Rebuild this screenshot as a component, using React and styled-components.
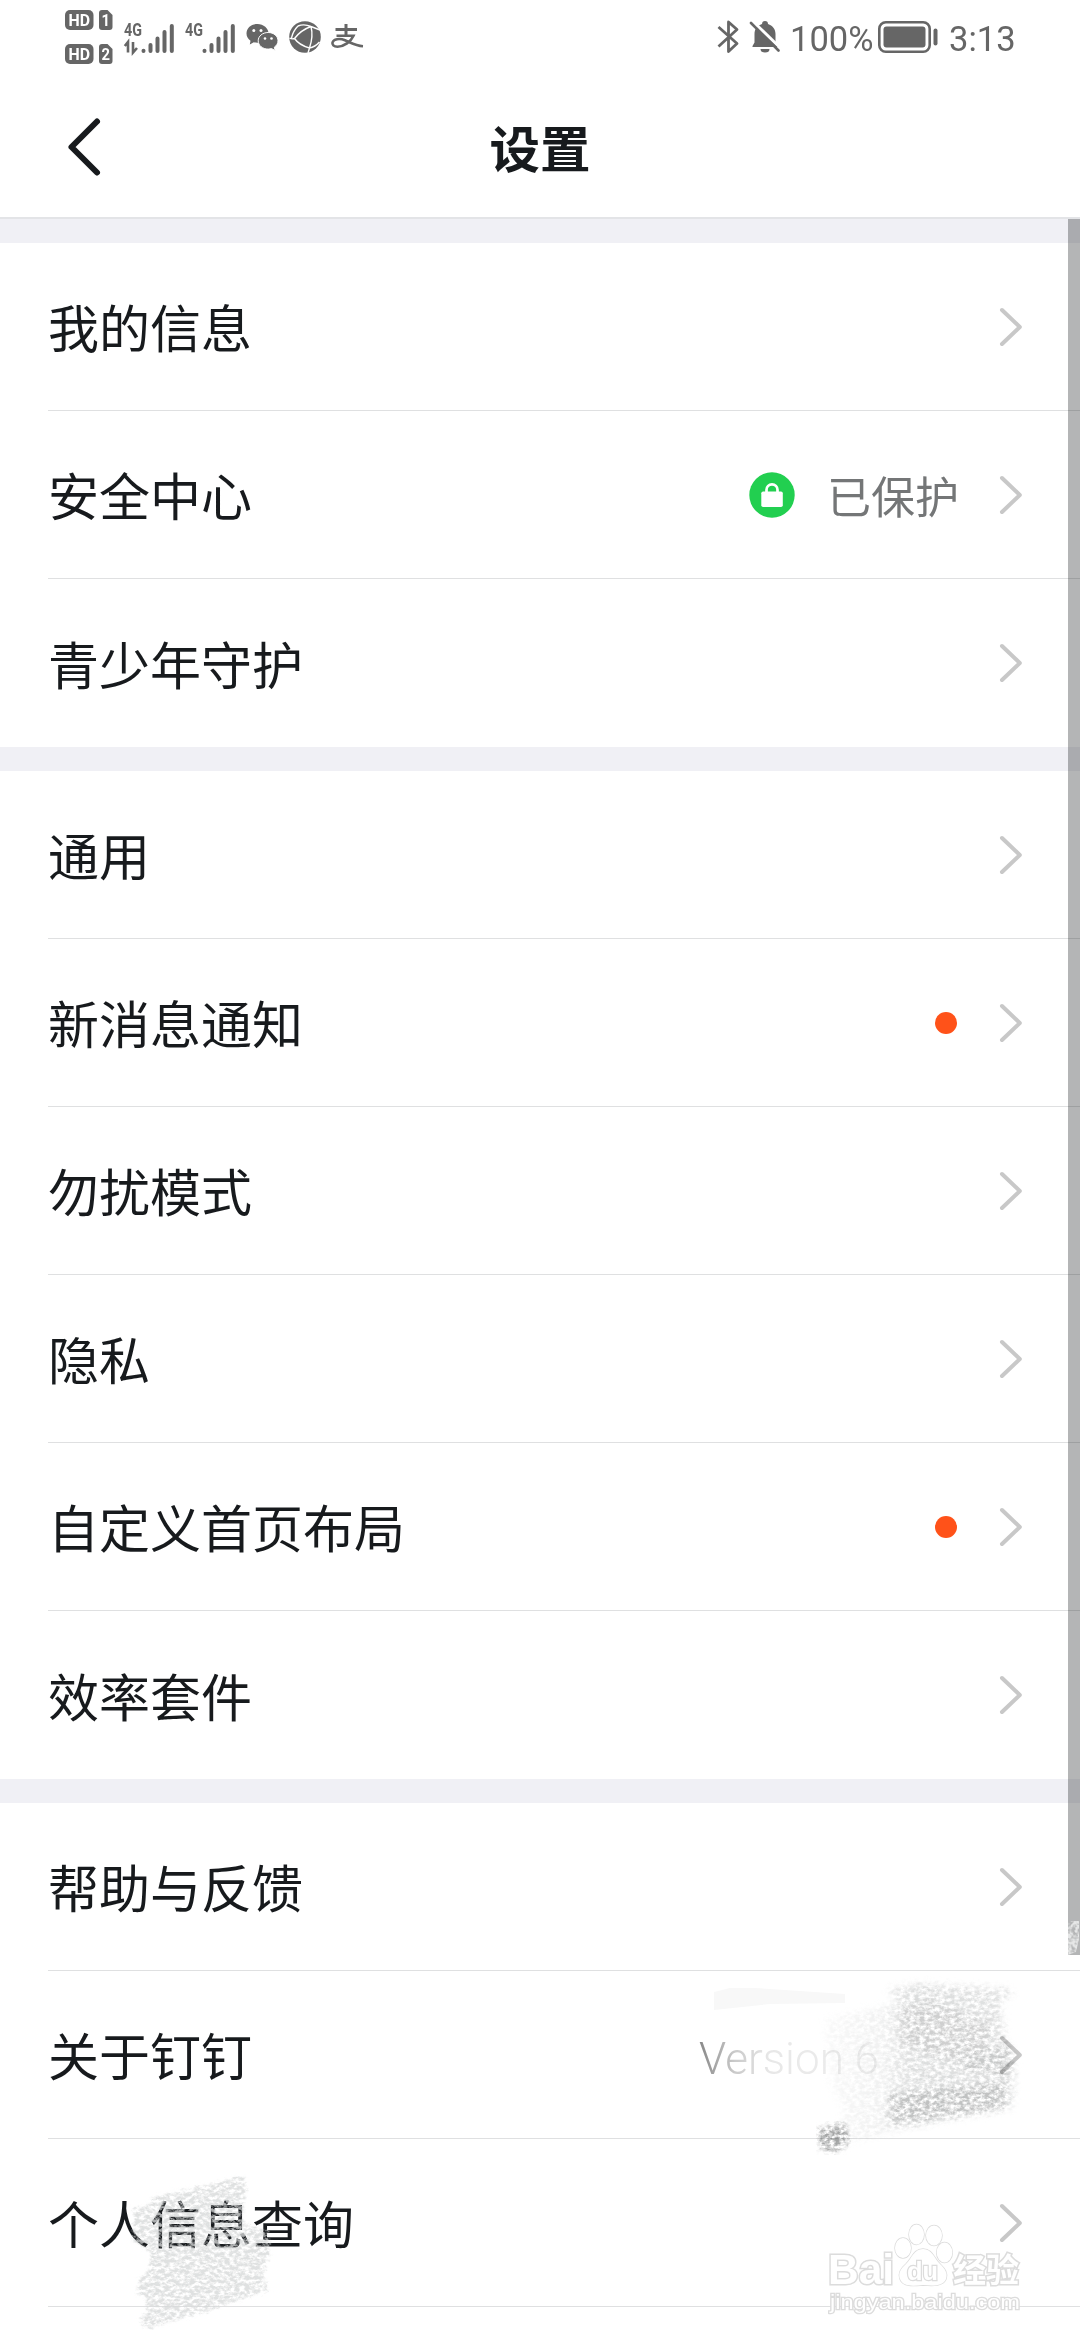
import React from "react";
import styled, { createGlobalStyle, css } from "styled-components";

const groups = [
  [
    { label: "我的信息" },
    { label: "安全中心", status: "已保护" },
    { label: "青少年守护" },
  ],
  [
    { label: "通用" },
    { label: "新消息通知", dot: true },
    { label: "勿扰模式" },
    { label: "隐私" },
    { label: "自定义首页布局", dot: true },
    { label: "效率套件" },
  ],
  [
    { label: "帮助与反馈" },
    { label: "关于钉钉", version: "Version 6" },
    { label: "个人信息查询" },
    { label: "" },
  ],
];

const Signal = ({ data }) => (
  <svg width="51" height="34" viewBox="0 0 51 34">
    <text x="0" y="15.5" fontSize="18" fontWeight="700" textLength="18" lengthAdjust="spacingAndGlyphs">
      4G
    </text>
    {data && (
      <path d="M0.8 26L4 22V32.500M9 22V32.500L13 28" fill="none" stroke="#666" strokeWidth="2.6" />
    )}
    <g stroke="#666" strokeWidth="4" strokeLinecap="round">
      <path d="M19.500 30.800v.1M26.500 25v6M33.500 18.500v12.500M40.500 12v19M47.800 6v25" />
    </g>
  </svg>
);

const HdBadge = ({ sim }) => (
  <svg width="48" height="20" viewBox="0 0 48 20">
    <rect width="28.500" height="20" rx="5" fill="#666" />
    <path d="M37 0h5.500l5 5V17a3 3 0 0 1-3 3H37a3 3 0 0 1-3-3V3a3 3 0 0 1 3-3z" fill="#666" />
    <text x="3.500" y="16" fontSize="17" fontWeight="700" fill="#fff" textLength="21.500" lengthAdjust="spacingAndGlyphs">
      HD
    </text>
    <text x="36.500" y="16" fontSize="16" fontWeight="700" fill="#fff" textLength="8.500" lengthAdjust="spacingAndGlyphs">
      {sim}
    </text>
  </svg>
);

const WechatIcon = () => (
  <svg width="33" height="28" viewBox="0 0 33 28">
    <path
      d="M11.500 1C5.200 1 0.500 5.200 0.500 10.500c0 3 1.500 5.500 4 7.200L3.800 21.500l4-2.300c1.200.4 2.400.5 3.700.5 6 0 11-4.200 11-9.300S17.500 1 11.500 1z"
      fill="#666"
    />
    <path
      d="M22.200 9.500c-5.600 0-10 3.600-10 8.300s4.400 8.300 10 8.300c1.200 0 2.300-.2 3.300-.5l3.700 1.900-.9-3.300c2.300-1.500 3.700-3.800 3.700-6.400 0-4.700-4.300-8.300-9.800-8.300z"
      fill="#666"
      stroke="#fff"
      strokeWidth="1"
    />
    <g fill="#fff">
      <circle cx="7.800" cy="7.500" r="1.500" />
      <circle cx="15" cy="7.500" r="1.500" />
      <circle cx="19" cy="15.500" r="1.300" />
      <circle cx="25.500" cy="15.500" r="1.300" />
    </g>
  </svg>
);

const GlobeIcon = () => (
  <svg width="32" height="32" viewBox="0 0 32 32">
    <circle cx="16" cy="16" r="15.800" fill="#666" />
    <g fill="none" stroke="#fff" strokeWidth="1.400">
      <path d="M9 5Q15 2.500 22 5.500L31 9M22 5.500Q12 9 5.500 17.500M9 5Q4 10 2.500 17M5.500 17.500Q3 18.500 0.500 17M5.500 17.500Q10 24 20.500 27M22 5.500Q24.500 15 20.500 27M20.500 27Q26 26 30.500 21M20.500 27L19 32" />
    </g>
  </svg>
);

const AlipayIcon = () => (
  <svg width="32" height="26" viewBox="0 0 32 26">
    <g fill="none" stroke="#666">
      <path d="M4.500 5.500H26M15 0V11.500" strokeWidth="3" />
      <path
        d="M5.500 11.800H22.500C20 17.500 13 22.700 6.500 22.700C2.500 22.700 1 20.500 1.500 18.500C2.500 15 8.500 14 14 16.300C20 18.800 25 21.800 32 22.300"
        strokeWidth="2.600"
      />
    </g>
  </svg>
);

const BluetoothIcon = () => (
  <svg width="24" height="34" viewBox="0 0 24 34">
    <path
      d="M1.500 7L20 23.500L11.500 31.500V2L20 9.500L1.500 26.500"
      fill="none"
      stroke="#666"
      strokeWidth="2.800"
      strokeLinejoin="round"
    />
  </svg>
);

const MutedIcon = () => (
  <svg width="31" height="32" viewBox="0 0 31 32">
    <path
      d="M12 3a3 3 0 0 1 6 0c4.500 1.500 7.500 5 7.500 10v8.500l3 3.500v1H2.500v-1l2-3.500V13c0-5 3-8.500 7.500-10z"
      fill="#666"
    />
    <path d="M10.500 28h9a4.500 3.500 0 0 1-9 0z" fill="#666" />
    <path d="M2 -0.500L31 27.500" stroke="#fff" strokeWidth="3" />
    <path d="M1 2L28.500 29.500" stroke="#666" strokeWidth="2.600" strokeLinecap="round" />
  </svg>
);

const BatteryIcon = () => (
  <svg width="62" height="32" viewBox="0 0 62 32">
    <rect x="1.300" y="1.300" width="50.400" height="29.400" rx="6.500" fill="none" stroke="#666" strokeWidth="2.600" />
    <rect x="5.500" y="5.500" width="42" height="21" rx="3" fill="#666" />
    <rect x="55.500" y="7.500" width="4" height="17" rx="2" fill="#666" />
  </svg>
);

const LockIcon = () => (
  <svg width="46" height="46" viewBox="0 0 46 46">
    <circle cx="23" cy="23" r="22.700" fill="#22cf50" />
    <path d="M17.500 20v-2.200a5.500 5.500 0 0 1 11 0V20" fill="none" stroke="#fff" strokeWidth="2.700" />
    <rect x="12.300" y="19.500" width="21.500" height="15.500" rx="1.800" fill="#fff" />
  </svg>
);

const Chevron = () => (
  <svg width="24" height="40" viewBox="0 0 24 40">
    <path
      d="M3 3L20.800 20L3 37"
      fill="none"
      stroke="#c8c8c8"
      strokeWidth="4"
      strokeLinecap="round"
      strokeLinejoin="round"
    />
  </svg>
);

// Chalk-like strokes over the version number
const VersionSmudge = () => (
  <svg width="420" height="220" viewBox="0 0 420 220">
    <defs>
      <filter id="chalk" x="-5%" y="-5%" width="110%" height="110%">
        <feTurbulence type="fractalNoise" baseFrequency="0.200 0.300" numOctaves="4" seed="7" result="noise" />
        <feColorMatrix in="noise" type="matrix" values="0 0 0 0 0  0 0 0 0 0  0 0 0 0 0  0 0 0 2.600 -0.750" result="grain" />
        <feGaussianBlur in="SourceGraphic" stdDeviation="3" result="soft" />
        <feDisplacementMap in="soft" in2="noise" scale="8" xChannelSelector="R" yChannelSelector="G" result="rough" />
        <feComposite in="rough" in2="grain" operator="in" />
      </filter>
      <linearGradient id="fade" x1="0" x2="1">
        <stop offset="0" stopColor="#c4c6c6" stopOpacity="0.100" />
        <stop offset="0.300" stopColor="#c4c6c6" stopOpacity="0.250" />
        <stop offset="0.480" stopColor="#c4c6c6" stopOpacity="0.600" />
        <stop offset="1" stopColor="#c4c6c6" stopOpacity="0.500" />
      </linearGradient>
    </defs>
    <path d="M54 30L70 26L95 26L185 32V41L110 42L54 48z" fill="#f8f8f8" />
    <g filter="url(#chalk)">
      <path d="M165 58L235 42L228 27L255 22L350 27L352 34L340 38L345 75L355 110L352 145L345 147L250 165L165 185L185 150L170 120z" fill="url(#fade)" />
      <path d="M240 45L270 40L300 50L335 62L325 90L290 98L240 82z" fill="#b8baba" opacity="0.400" />
      <path d="M228 132L290 126L345 120L345 146L230 162z" fill="#b0b2b2" opacity="0.650" />
      <path d="M305 92L352 84L352 115L300 106z" fill="#b0b2b2" opacity="0.500" />
    </g>
    <g filter="url(#chalk)">
      <path d="M158 168L184 161L189 178L174 191L160 186z" fill="#a0a2a2" />
    </g>
  </svg>
);

const NameSmudge = () => (
  <svg width="145" height="165" viewBox="0 0 145 165">
    <defs>
      <filter id="grit" x="-5%" y="-5%" width="110%" height="110%">
        <feTurbulence type="fractalNoise" baseFrequency="0.200 0.300" numOctaves="4" seed="12" result="noise" />
        <feColorMatrix in="noise" type="matrix" values="0 0 0 0 0  0 0 0 0 0  0 0 0 0 0  0 0 0 3 -0.900" result="grain" />
        <feGaussianBlur in="SourceGraphic" stdDeviation="1.500" result="soft" />
        <feDisplacementMap in="soft" in2="noise" scale="8" xChannelSelector="R" yChannelSelector="G" result="rough" />
        <feComposite in="rough" in2="grain" operator="in" />
      </filter>
    </defs>
    <g filter="url(#grit)">
      <path
        d="M22 28L113 6L116 16L112 52L138 62L140 85L132 105L138 120L80 140L18 158L10 152L18 140L16 126L6 124L10 108L20 100V80L2 70L4 38L20 36z"
        fill="#d6d8d8"
        opacity="0.780"
      />
    </g>
  </svg>
);

const BarSmudge = () => (
  <svg width="12" height="34" viewBox="0 0 12 34">
    <filter id="dust" x="0" y="0" width="100%" height="100%">
      <feTurbulence type="fractalNoise" baseFrequency="0.250" numOctaves="3" seed="4" result="noise" />
      <feColorMatrix in="noise" type="matrix" values="0 0 0 0 0  0 0 0 0 0  0 0 0 0 0  0 0 0 3 -0.900" result="grain" />
      <feComposite in="SourceGraphic" in2="grain" operator="in" />
    </filter>
    <path d="M0 0H11V18L8 31L0 34z" fill="#e6e7e7" filter="url(#dust)" />
  </svg>
);

const Watermark = () => (
  <svg width="200" height="100" viewBox="0 0 200 100">
    <g fill="#fff" stroke="#dcdcdc" strokeWidth="1.500" paintOrder="stroke" fontWeight="700">
      <text x="0" y="64" fontSize="43" fontFamily="Liberation Sans" strokeWidth="3" textLength="66" lengthAdjust="spacingAndGlyphs">
        Bai
      </text>
      <ellipse cx="75" cy="28" rx="8" ry="10" />
      <ellipse cx="88.500" cy="14.500" rx="7.500" ry="10" />
      <ellipse cx="106" cy="15.500" rx="8" ry="10" />
      <ellipse cx="116.500" cy="32.500" rx="7.800" ry="10" />
      <path d="M95 29c-9 0-11 9-17 15-6 5-8 10-6 15 3 8 13 7 23 6 11 1 20 1 23-6 2-6-1-10-6-15-6-6-8-15-17-15z" />
      <text x="79" y="59.500" fontSize="26" fontFamily="Liberation Sans" strokeWidth="2.500" textLength="31" lengthAdjust="spacingAndGlyphs">
        du
      </text>
      <text x="125" y="62" fontSize="33" strokeWidth="3" textLength="66" lengthAdjust="spacingAndGlyphs">
        经验
      </text>
      <text x="2" y="89" fontSize="21" fontFamily="Liberation Sans" fontWeight="400" strokeWidth="2.500" textLength="190" lengthAdjust="spacingAndGlyphs">
        jingyan.baidu.com
      </text>
    </g>
  </svg>
);

export default function App() {
  return (
    <Screen>
      <GlobalStyle />
      <StatusBar>
        <HdStack>
          <HdBadge sim="1" />
          <HdBadge sim="2" />
        </HdStack>
        <Signal data />
        <Signal />
        <WechatIcon />
        <GlobeIcon />
        <AlipayIcon />
        <StatusRight>
          <BluetoothIcon />
          <MutedIcon />
          <StatusText $width={79}>100%</StatusText>
          <BatteryIcon />
          <StatusText $width={69}>3:13</StatusText>
        </StatusRight>
      </StatusBar>
      <Header>
        <BackButton aria-label="返回">
          <svg width="36" height="60" viewBox="0 0 36 60">
            <path
              d="M31 4.500L5.500 30L31 55.500"
              fill="none"
              stroke="#171a1d"
              strokeWidth="6"
              strokeLinecap="round"
              strokeLinejoin="round"
            />
          </svg>
        </BackButton>
        <Title>设置</Title>
      </Header>
      {groups.map((rows, i) => (
        <Group key={i}>
          {rows.map((row) => (
            <Row key={row.label}>
              <Label>{row.label}</Label>
              {row.status && (
                <>
                  <LockIcon />
                  <Status>{row.status}</Status>
                </>
              )}
              {row.dot && <Dot />}
              {row.version && <Version>{row.version}</Version>}
              {row.label && <Chevron />}
            </Row>
          ))}
        </Group>
      ))}
      <Scrollbar />
      <Overlay $left={1068} $top={1921}>
        <BarSmudge />
      </Overlay>
      <Overlay $left={660} $top={1962} $blend="multiply">
        <VersionSmudge />
      </Overlay>
      <Overlay $left={130} $top={2170}>
        <NameSmudge />
      </Overlay>
      <Overlay $left={828} $top={2220}>
        <Watermark />
      </Overlay>
    </Screen>
  );
}

const GlobalStyle = createGlobalStyle`
  body {
    margin: 0;
    background: #fff;
  }
`;

const Screen = styled.div`
  position: relative;
  width: 1080px;
  height: 2340px;
  overflow: hidden;
  background: #fff;
  color: #171a1d;
  font-family: "Noto Sans CJK SC", sans-serif;
`;

const StatusBar = styled.div`
  display: flex;
  align-items: center;
  box-sizing: border-box;
  height: 74px;
  padding-left: 65px;

  svg {
    flex: none;
    overflow: visible;
    font-family: Roboto, sans-serif;
    fill: #666;
  }
  > svg {
    margin-right: 10px;
  }
`;

const HdStack = styled.div`
  display: flex;
  flex-direction: column;
  gap: 14px;
  margin-right: 11px;
`;

const StatusRight = styled.div`
  display: flex;
  align-items: center;
  gap: 9px;
  margin-left: auto;
  margin-right: 62px;
`;

const StatusText = styled.span`
  width: ${(props) => props.$width}px;
  padding-top: 4px;
  font-family: Roboto, sans-serif;
  font-size: 34.500px;
  line-height: 40px;
  white-space: nowrap;
  color: #666;
`;

const Header = styled.header`
  position: relative;
  display: flex;
  align-items: center;
  justify-content: center;
  box-sizing: border-box;
  height: 145px;
  border-bottom: 2px solid #e3e4e7;
`;

const BackButton = styled.button`
  position: absolute;
  left: 66px;
  top: 43px;
  padding: 0;
  border: 0;
  background: none;
  line-height: 0;
`;

const Title = styled.h1`
  margin: 1px 0 0;
  font-size: 50.500px;
  line-height: 74px;
  font-weight: 700;
`;

const Group = styled.section`
  border-top: 24px solid #f0f0f5;
`;

const Row = styled.div`
  display: flex;
  align-items: center;
  box-sizing: border-box;
  height: 168px;
  margin-left: 48px;
  padding-right: 57px;
  border-bottom: 1px solid #dfe0e1;

  &:last-child {
    border-bottom: 0;
  }
  > svg {
    flex: none;
  }
`;

const Label = styled.span`
  flex: 1;
  padding-bottom: 1px;
  font-size: 51px;
  line-height: 74px;
`;

const Status = styled.span`
  margin: 0 40px 0 32px;
  font-size: 44px;
  line-height: 64px;
  color: #747677;
`;

const Dot = styled.span`
  width: 22px;
  height: 22px;
  margin-right: 42px;
  border-radius: 50%;
  background: #ff5219;
`;

// the text is rubbed out towards its right end
const Version = styled.span`
  width: 300px;
  padding-top: 8px;
  font-family: Roboto, sans-serif;
  font-weight: 300;
  font-size: 44px;
  color: #888;
  mask-image: linear-gradient(
    to right,
    #000 0,
    rgba(0, 0, 0, 0.450) 35px,
    rgba(0, 0, 0, 0.200) 70px,
    rgba(0, 0, 0, 0.120) 200px
  );
`;

const over = css`
  position: absolute;
  pointer-events: none;
`;

const Scrollbar = styled.div`
  ${over}
  right: 0;
  top: 219px;
  width: 12px;
  height: 1736px;
  background: rgba(23, 26, 29, 0.320);
`;

const Overlay = styled.div`
  ${over}
  left: ${(props) => props.$left}px;
  top: ${(props) => props.$top}px;
  mix-blend-mode: ${(props) => props.$blend || "normal"};

  svg {
    display: block;
    font-family: "Noto Sans CJK SC", sans-serif;
  }
`;
